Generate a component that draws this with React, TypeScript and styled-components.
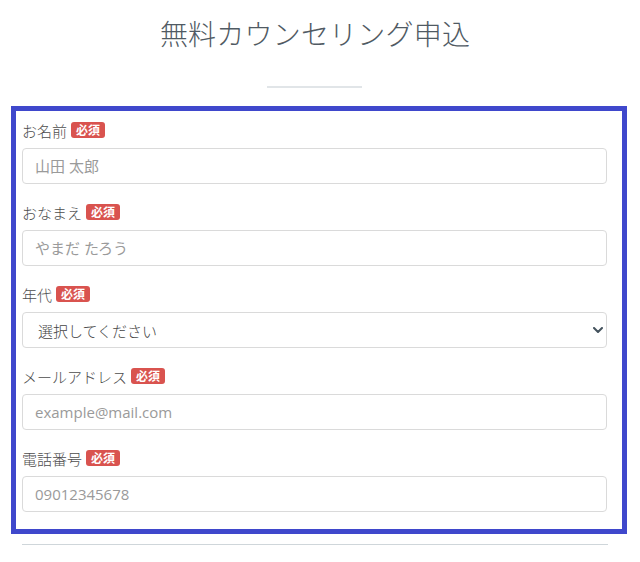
import React from "react";
import styled, { createGlobalStyle } from "styled-components";

const Global = createGlobalStyle`
  html, body { margin: 0; padding: 0; background: #fff; }
  body { font-family: "Open Sans", "Noto Sans CJK JP", sans-serif; color: #444; }
  * { box-sizing: border-box; }
`;

const Page = styled.div`
  width: 640px;
  display: flex;
  flex-direction: column;
`;

const Header = styled.div`
  width: 586px;
  margin-left: 22px;
  display: flex;
  flex-direction: column;
  align-items: center;
`;

const Title = styled.h1`
  margin: 13px 0 0;
  font-family: "Noto Sans CJK JP", sans-serif;
  font-weight: 300;
  font-size: 28px;
  line-height: normal;
  color: #505a63;
  letter-spacing: 0.2px;
`;

const TitleRule = styled.div`
  width: 95px;
  height: 2px;
  background: #e1e5e8;
  margin-top: 33px;
  margin-left: -1px;
`;

const FormBox = styled.form`
  width: 616px;
  margin: 18px 0 0 11px;
  border: 5px solid #3f48cc;
  padding: 9px 15px 17px 6px;
  display: flex;
  flex-direction: column;
`;

const Group = styled.div`
  display: flex;
  flex-direction: column;
  margin-bottom: ${(p: { last?: boolean }) => (p.last ? "0" : "18px")};
`;

const LabelRow = styled.label`
  display: flex;
  align-items: center;
  gap: 4px;
  height: 20px;
  margin-bottom: 8px;
  font-family: "Noto Sans CJK JP", sans-serif;
  font-weight: 300;
  font-size: 15px;
  color: #4d4d4d;
`;

const Badge = styled.span`
  display: inline-flex;
  align-items: center;
  justify-content: center;
  height: 16px;
  padding: 0 5px;
  border-radius: 3px;
  background: #d9534f;
  color: #fff;
  font-family: "Noto Sans CJK JP", sans-serif;
  font-weight: 700;
  font-size: 12px;
  line-height: 1;
`;

const Input = styled.input`
  width: 585px;
  height: 36px;
  border: 1px solid #dadada;
  border-radius: 4px;
  padding: 0 12px;
  font-family: "Open Sans", "Noto Sans CJK JP", sans-serif;
  font-size: 15px;
  color: #555;
  background: #fff;
  outline: none;
  &::placeholder { color: #9a9a9a; }
`;

const SelectWrap = styled.div`
  position: relative;
  width: 585px;
`;

const Select = styled.select`
  width: 585px;
  height: 36px;
  border: 1px solid #dadada;
  border-radius: 4px;
  padding: 0 30px 0 15px;
  font-family: "Noto Sans CJK JP", sans-serif;
  font-weight: 300;
  font-size: 15px;
  color: #444;
  background: #fff;
  appearance: none;
  -webkit-appearance: none;
  outline: none;
`;

const Chevron = styled.svg`
  position: absolute;
  right: 4px;
  top: 15px;
  pointer-events: none;
`;

const BottomRule = styled.div`
  width: 586px;
  height: 1px;
  margin: 10px 0 0 22px;
  background: #cfd6da;
`;

type Field = { label: string; placeholder?: string; type?: string; select?: boolean };

const fields: Field[] = [
  { label: "お名前", placeholder: "山田 太郎" },
  { label: "おなまえ", placeholder: "やまだ たろう" },
  { label: "年代", select: true },
  { label: "メールアドレス", placeholder: "example@mail.com", type: "email" },
  { label: "電話番号", placeholder: "09012345678", type: "tel" },
];

export default function App() {
  return (
    <Page>
      <Global />
      <Header>
        <Title>無料カウンセリング申込</Title>
        <TitleRule />
      </Header>
      <FormBox onSubmit={(e) => e.preventDefault()}>
        {fields.map((f, i) => (
          <Group key={f.label} last={i === fields.length - 1}>
            <LabelRow>
              {f.label}
              <Badge>必須</Badge>
            </LabelRow>
            {f.select ? (
              <SelectWrap>
                <Select defaultValue="">
                  <option value="">選択してください</option>
                  <option>10代</option>
                  <option>20代</option>
                  <option>30代</option>
                </Select>
                <Chevron width="10" height="6" viewBox="0 0 10 6">
                  <path d="M1 1 L5 5 L9 1" fill="none" stroke="#44525d" strokeWidth="2" strokeLinecap="round" strokeLinejoin="round" />
                </Chevron>
              </SelectWrap>
            ) : (
              <Input type={f.type || "text"} placeholder={f.placeholder} />
            )}
          </Group>
        ))}
      </FormBox>
      <BottomRule />
    </Page>
  );
}
